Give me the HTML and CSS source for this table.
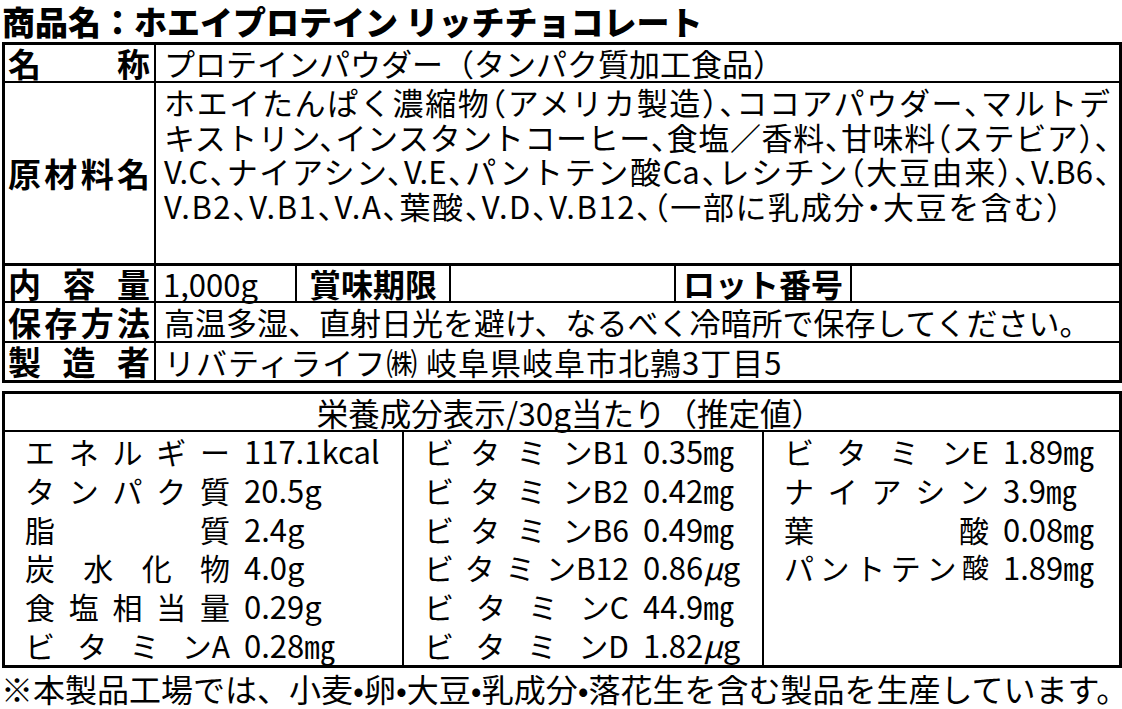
FILE: index.html
```html
<!DOCTYPE html>
<html lang="ja">
<head>
<meta charset="utf-8">
<title>商品ラベル</title>
<link rel="stylesheet" href="styles.css">
</head>
<body>
<div class="page">
  <h1 class="title">商品名：ホエイプロテイン リッチチョコレート</h1>

  <div class="box info">
    <div class="row r-name">
      <div class="label"><span class="lt"><span>名</span><span>称</span></span></div>
      <div class="val">プロテインパウダー（タンパク質加工食品）</div>
    </div>
    <div class="row r-ing thick">
      <div class="label"><span class="lt"><span>原</span><span>材</span><span>料</span><span>名</span></span></div>
      <div class="val ing">
        <div class="ln">ホエイたんぱく濃縮物（アメリカ製造）、ココアパウダー、マルトデ</div>
        <div class="ln">キストリン、インスタントコーヒー、食塩／香料、甘味料（ステビア）、</div>
        <div class="ln">V.C、ナイアシン、V.E、パントテン酸Ca、レシチン（大豆由来）、V.B6、</div>
        <div class="ln last">V.B2、V.B1、V.A、葉酸、V.D、V.B12、（一部に乳成分・大豆を含む）</div>
      </div>
    </div>
    <div class="row r-qty">
      <div class="label"><span class="lt"><span>内</span><span>容</span><span>量</span></span></div>
      <div class="cell c-amount">1,000g</div>
      <div class="cell c-head c-best">賞味期限</div>
      <div class="cell c-blank"></div>
      <div class="cell c-head c-lot">ロット番号</div>
      <div class="cell c-rest"></div>
    </div>
    <div class="row r-store">
      <div class="label"><span class="lt"><span>保</span><span>存</span><span>方</span><span>法</span></span></div>
      <div class="val">高温多湿、直射日光を避け、なるべく冷暗所で保存してください。</div>
    </div>
    <div class="row r-maker">
      <div class="label"><span class="lt"><span>製</span><span>造</span><span>者</span></span></div>
      <div class="val maker">リバティライフ㈱ 岐阜県岐阜市北鶉3丁目5</div>
    </div>
  </div>

  <div class="box nutri">
    <div class="nhead">栄養成分表示/30g当たり（推定値<span class="hp">）</span></div>
    <div class="ncols">
      <div class="ncol ncol1">
        <div class="nitem"><div class="nlab"><span>エ</span><span>ネ</span><span>ル</span><span>ギ</span><span>ー</span></div><div class="nval">117.1kcal</div></div>
        <div class="nitem"><div class="nlab"><span>タ</span><span>ン</span><span>パ</span><span>ク</span><span>質</span></div><div class="nval">20.5g</div></div>
        <div class="nitem"><div class="nlab"><span>脂</span><span>質</span></div><div class="nval">2.4g</div></div>
        <div class="nitem"><div class="nlab"><span>炭</span><span>水</span><span>化</span><span>物</span></div><div class="nval">4.0g</div></div>
        <div class="nitem"><div class="nlab"><span>食</span><span>塩</span><span>相</span><span>当</span><span>量</span></div><div class="nval">0.29g</div></div>
        <div class="nitem"><div class="nlab"><span>ビ</span><span>タ</span><span>ミ</span><span>ンA</span></div><div class="nval">0.28㎎</div></div>
      </div>
      <div class="ncol ncol2">
        <div class="nitem"><div class="nlab"><span>ビ</span><span>タ</span><span>ミ</span><span>ンB1</span></div><div class="nval">0.35㎎</div></div>
        <div class="nitem"><div class="nlab"><span>ビ</span><span>タ</span><span>ミ</span><span>ンB2</span></div><div class="nval">0.42㎎</div></div>
        <div class="nitem"><div class="nlab"><span>ビ</span><span>タ</span><span>ミ</span><span>ンB6</span></div><div class="nval">0.49㎎</div></div>
        <div class="nitem"><div class="nlab"><span>ビ</span><span>タ</span><span>ミ</span><span>ンB12</span></div><div class="nval">0.86<span class="mu">μ</span>g</div></div>
        <div class="nitem"><div class="nlab"><span>ビ</span><span>タ</span><span>ミ</span><span>ンC</span></div><div class="nval">44.9㎎</div></div>
        <div class="nitem"><div class="nlab"><span>ビ</span><span>タ</span><span>ミ</span><span>ンD</span></div><div class="nval">1.82<span class="mu">μ</span>g</div></div>
      </div>
      <div class="ncol ncol3">
        <div class="nitem"><div class="nlab"><span>ビ</span><span>タ</span><span>ミ</span><span>ンE</span></div><div class="nval">1.89㎎</div></div>
        <div class="nitem"><div class="nlab"><span>ナ</span><span>イ</span><span>ア</span><span>シ</span><span>ン</span></div><div class="nval">3.9㎎</div></div>
        <div class="nitem"><div class="nlab"><span>葉</span><span>酸</span></div><div class="nval">0.08㎎</div></div>
        <div class="nitem"><div class="nlab"><span>パ</span><span>ン</span><span>ト</span><span>テ</span><span>ン</span><span class="small">酸</span></div><div class="nval">1.89㎎</div></div>
      </div>
    </div>
  </div>

  <p class="note">※本製品工場では、小麦•卵•大豆•乳成分•落花生を含む製品を生産しています。</p>
</div>
</body>
</html>
```

FILE: styles.css
```css
html, body {
  margin: 0;
  padding: 0;
  background: #ffffff;
}

body {
  color: #000000;
  font-family: "Noto Sans CJK JP", "Noto Sans", sans-serif;
}

.page {
  width: 1122px;
  height: 709px;
  overflow: hidden;
}

.title {
  margin: 0;
  padding-left: 2px;
  height: 42px;
  font-size: 33px;
  line-height: 42px;
  font-weight: 900;
  white-space: nowrap;
}

.box {
  margin-left: 2px;
  width: 1120px;
  box-sizing: border-box;
  border: 3px solid #000;
}

.row {
  display: flex;
  border-bottom: 2px solid #000;
}

.row.thick {
  border-bottom-width: 3px;
}

.row:last-child {
  border-bottom: 0;
}

.label {
  flex: none;
  width: 151px;
  box-sizing: border-box;
  padding: 0 4px 0 3px;
  border-right: 2px solid #000;
  display: flex;
  align-items: center;
  font-size: 33px;
  font-weight: 700;
}

.lt {
  flex: 1;
  display: flex;
  justify-content: space-between;
  white-space: nowrap;
}

.val {
  flex: 1;
  padding-left: 8px;
  font-size: 31px;
  white-space: nowrap;
}

.val.maker {
  letter-spacing: 1px;
}

.r-name { height: 36px; }
.r-name .val, .r-name .label { line-height: 36px; }

.r-ing { height: 180px; }

.ing {
  padding-top: 2px;
  padding-right: 9px;
  line-height: 34.5px;
  font-feature-settings: "halt" 1;
}

.ln {
  text-align: justify;
  text-align-last: justify;
}

.ln.last {
  text-align-last: left;
  letter-spacing: 1.6px;
}

.r-qty { height: 35px; line-height: 35px; }
.r-store { height: 38px; line-height: 38px; }
.r-maker { height: 37px; line-height: 37px; }

.cell {
  flex: none;
  box-sizing: border-box;
  border-right: 2px solid #000;
  white-space: nowrap;
}

.c-amount {
  width: 141px;
  padding-left: 7px;
  font-size: 31px;
}

.c-head {
  font-size: 32px;
  font-weight: 700;
  text-align: center;
}

.c-best { width: 154px; }
.c-blank { width: 225px; }
.c-lot { width: 176px; }

.c-rest {
  flex: 1;
  border-right: 0;
}

.nutri {
  margin-top: 8px;
}

.nhead {
  height: 36px;
  line-height: 36px;
  text-align: center;
  font-size: 31.5px;
  border-bottom: 2px solid #000;
  white-space: nowrap;
}

.hp {
  font-feature-settings: "halt" 1;
}

.ncols {
  display: flex;
  height: 233px;
}

.ncol {
  box-sizing: border-box;
  padding-left: 20px;
}

.ncol1 {
  width: 399px;
  border-right: 2px solid #000;
}

.ncol2 {
  width: 360px;
  border-right: 2px solid #000;
}

.ncol3 {
  flex: 1;
}

.nitem {
  display: flex;
  font-size: 30px;
  line-height: 38.8px;
  white-space: nowrap;
}

.nlab {
  flex: none;
  width: 205px;
  margin-right: 14px;
  display: flex;
  justify-content: space-between;
}

.nlab .small {
  font-size: 27px;
}

.nval {
  font-size: 31px;
}

.mu {
  font-style: italic;
}

.note {
  margin: 0;
  padding-left: 1px;
  height: 41px;
  font-size: 32px;
  line-height: 41px;
  white-space: nowrap;
}
```
